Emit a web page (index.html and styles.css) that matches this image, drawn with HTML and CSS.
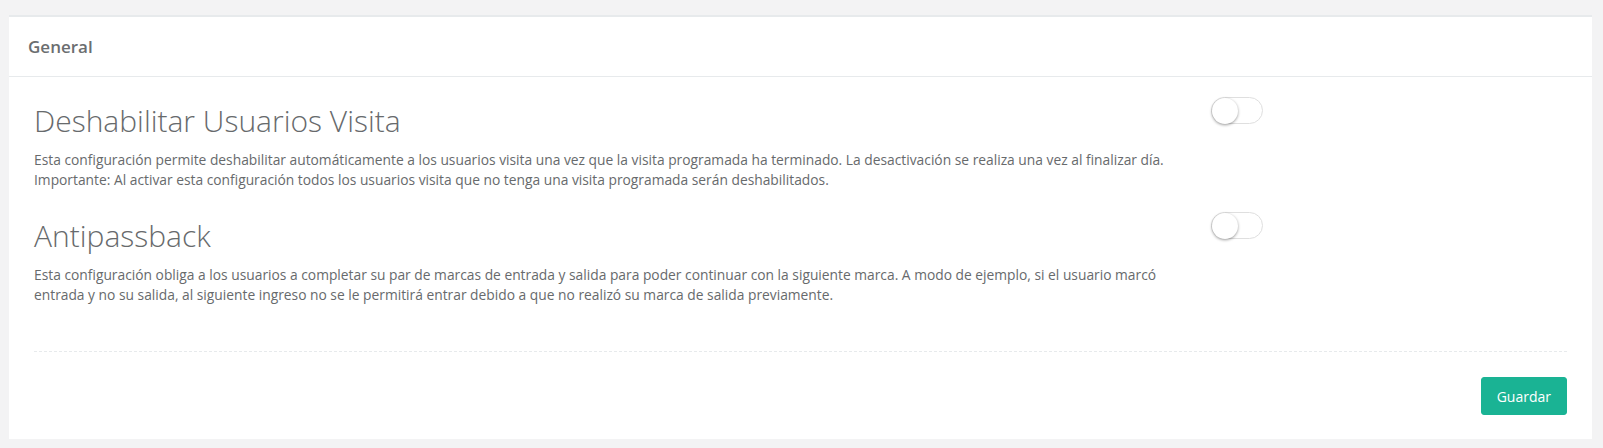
FILE: index.html
```html
<!DOCTYPE html>
<html lang="es">
<head>
<meta charset="utf-8">
<title>General</title>
<link rel="stylesheet" href="styles.css">
</head>
<body>
<div class="page">
  <div class="card">
    <div class="card-header">
      <h5 class="card-title">General</h5>
    </div>
    <div class="card-body">
      <div class="setting">
        <div class="setting-text">
          <h1 class="setting-title">Deshabilitar Usuarios Visita</h1>
          <p class="setting-desc">Esta configuración permite deshabilitar automáticamente a los usuarios visita una vez que la visita programada ha terminado. La desactivación se realiza una vez al finalizar día.<br>Importante: Al activar esta configuración todos los usuarios visita que no tenga una visita programada serán deshabilitados.</p>
        </div>
        <div class="setting-switch">
          <span class="switch"><span class="knob"></span></span>
        </div>
      </div>
      <div class="setting">
        <div class="setting-text">
          <h1 class="setting-title">Antipassback</h1>
          <p class="setting-desc">Esta configuración obliga a los usuarios a completar su par de marcas de entrada y salida para poder continuar con la siguiente marca. A modo de ejemplo, si el usuario marcó entrada y no su salida, al siguiente ingreso no se le permitirá entrar debido a que no realizó su marca de salida previamente.</p>
        </div>
        <div class="setting-switch">
          <span class="switch"><span class="knob"></span></span>
        </div>
      </div>
      <div class="divider"></div>
      <div class="actions">
        <button class="btn-primary" type="button">Guardar</button>
      </div>
    </div>
  </div>
</div>
</body>
</html>
```

FILE: styles.css
```css
* {
  box-sizing: border-box;
}

html, body {
  margin: 0;
  padding: 0;
}

body {
  background: #f3f3f4;
  font-family: "Open Sans", "Liberation Sans", sans-serif;
  color: #676a6c;
  font-size: 13px;
}

.page {
  padding: 15px 11px 9px 9px;
}

.card {
  background: #ffffff;
  border-top: 2px solid #e7eaec;
}

.card-header {
  height: 60px;
  border-bottom: 1px solid #e7eaec;
  display: flex;
  align-items: center;
  padding: 0 19px;
}

.card-title {
  margin: 0;
  font-size: 17px;
  font-weight: 600;
  color: #6b6e70;
  line-height: 22px;
}

.card-body {
  padding: 20px 25px 24px 25px;
}

.setting {
  display: flex;
  align-items: flex-start;
}

.setting + .setting {
  margin-top: 22px;
}

.setting-text {
  width: 1142px;
}

.setting-title {
  margin: 7px 0 13px 0;
  font-size: 30px;
  font-weight: 300;
  line-height: 33px;
  color: #676a6c;
}

.setting-desc {
  margin: 0;
  font-size: 13.8px;
  line-height: 20px;
  color: #676a6c;
}

.setting-switch {
  margin-left: 35px;
}

.switch {
  display: block;
  position: relative;
  width: 52px;
  height: 27px;
  border: 1px solid #dfdfdf;
  border-radius: 14px;
  background: #ffffff;
}

.knob {
  position: absolute;
  top: 0;
  left: 0;
  width: 26px;
  height: 26px;
  border-radius: 50%;
  background: #ffffff;
  box-shadow: 0 1px 3px rgba(0, 0, 0, 0.4);
}

.divider {
  margin-top: 46px;
  border-top: 1px dashed #e7eaec;
}

.actions {
  display: flex;
  justify-content: flex-end;
  margin-top: 25px;
}

.btn-primary {
  font-family: "Open Sans", "Liberation Sans", sans-serif;
  font-size: 14px;
  line-height: 20px;
  height: 38px;
  padding: 9px 15px;
  background: #1ab394;
  border: 1px solid #1ab394;
  border-radius: 3px;
  color: #ffffff;
  cursor: pointer;
}
```
